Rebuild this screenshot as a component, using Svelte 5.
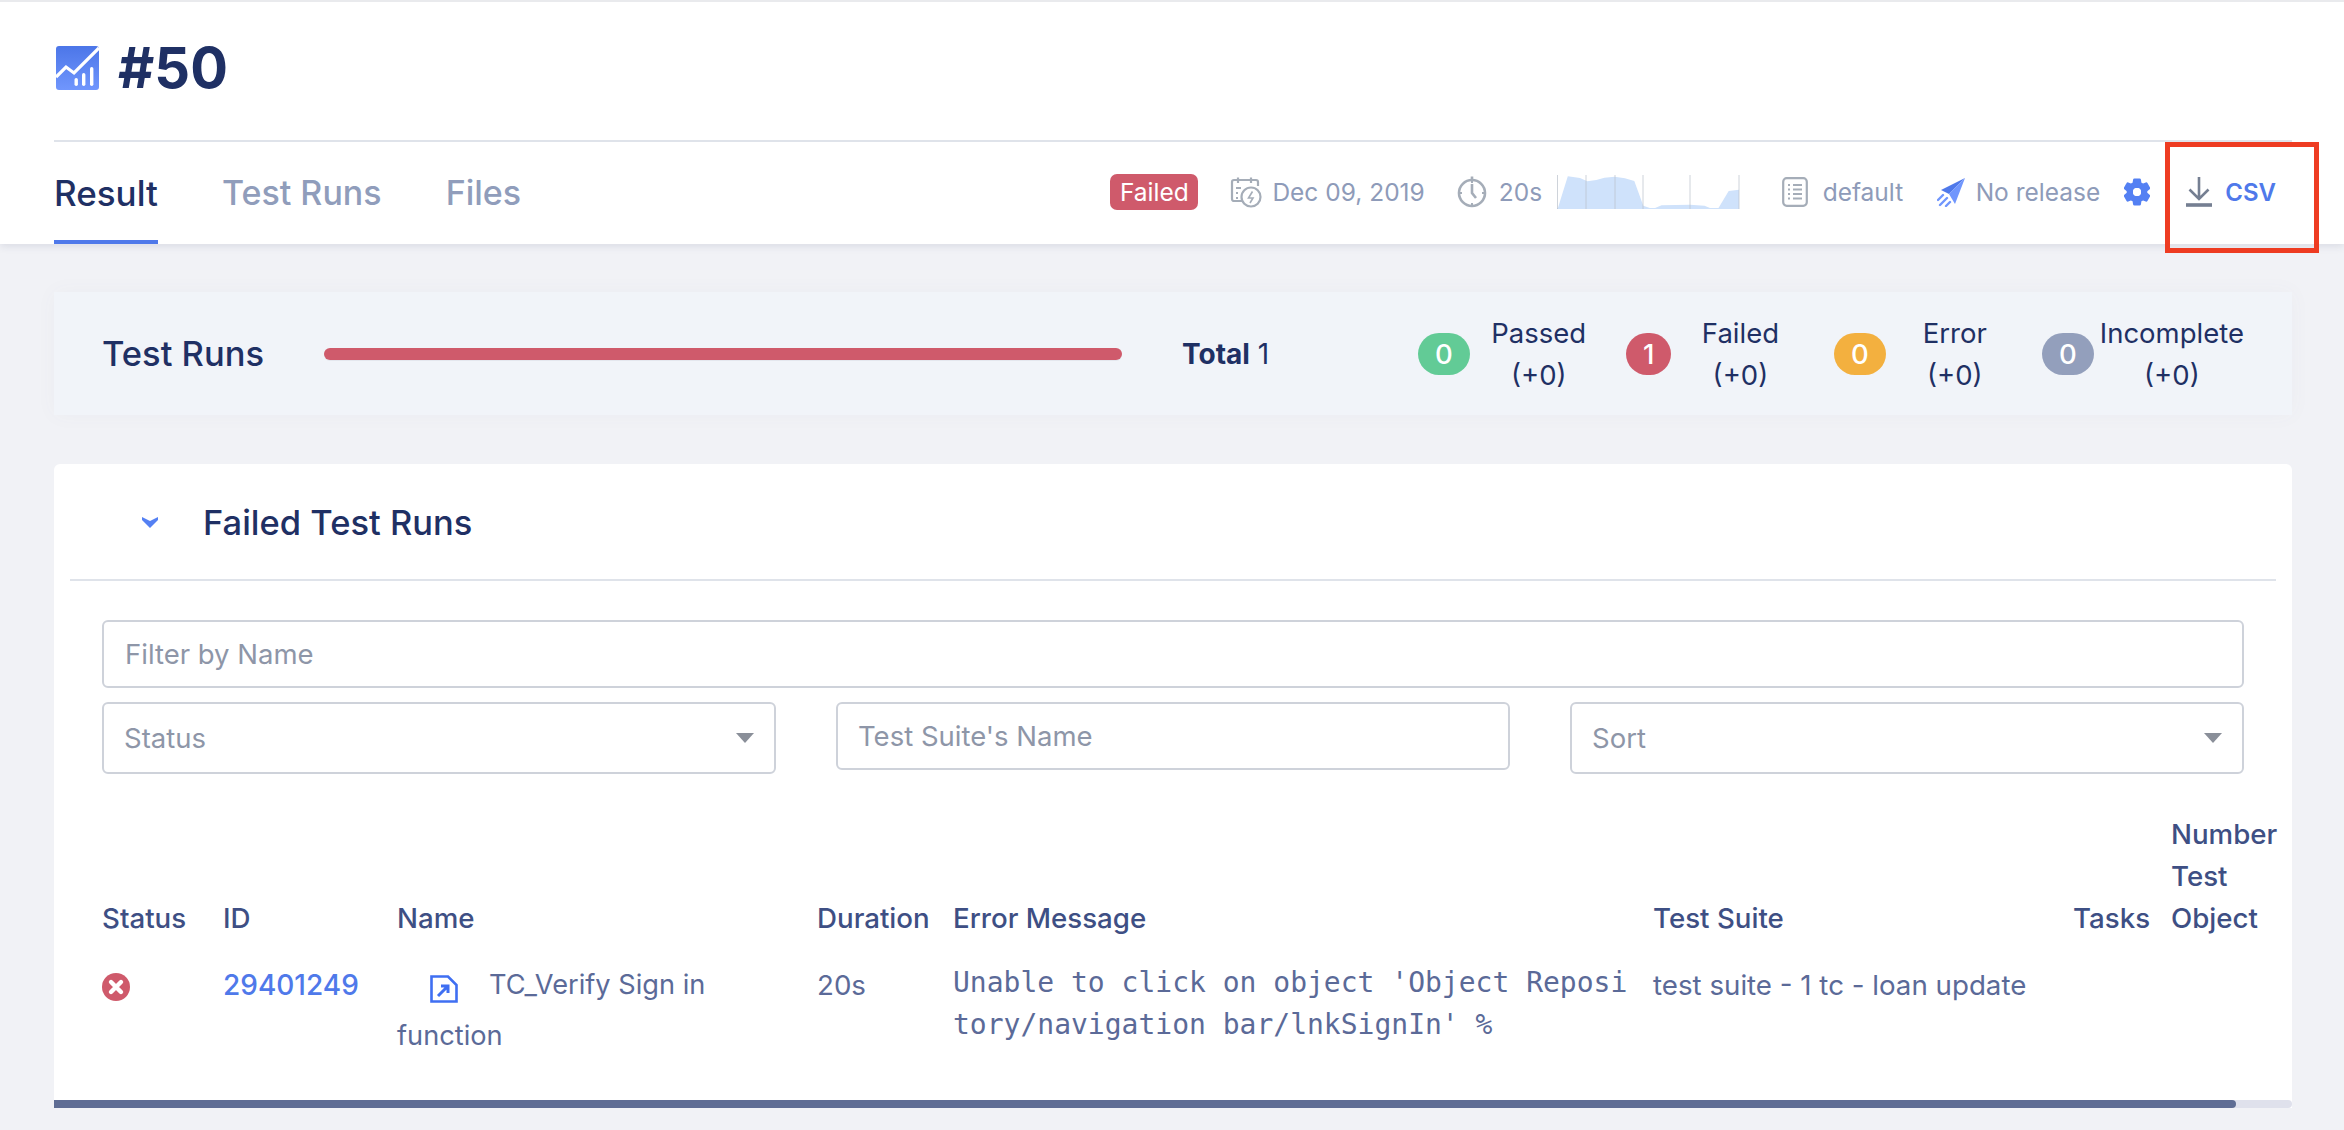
<script>
  const tabs = ['Result', 'Test Runs', 'Files'];
  const stats = [
    { label: 'Passed', count: 0, color: '#62cb96' },
    { label: 'Failed', count: 1, color: '#cf5a6b' },
    { label: 'Error', count: 0, color: '#f3b03f' },
    { label: 'Incomplete', count: 0, color: '#939fbc' }
  ];
  const gridlines = [0.5, 29, 58, 86, 133, 182];
  const spark = '0.6,34 10.8,1.3 23,3 30.3,6.3 39.3,5 47.5,2.7 57.7,1.7 67.9,3.3 77.3,6 86.3,30.7 95.7,34 104.6,30.3 133,29.7 147.5,30.7 153.6,33.3 161.5,33 171.7,16 182,14.7 182,34';
</script>

<div class="page">
  <header class="top">
    <div class="title">
      <svg class="logo" viewBox="0 0 43 44" width="43" height="44">
        <defs>
          <linearGradient id="lg" x1="0" y1="0" x2="0" y2="1">
            <stop offset="0" stop-color="#4c76e8" />
            <stop offset="1" stop-color="#7096fd" />
          </linearGradient>
        </defs>
        <rect width="43" height="44" rx="3" fill="url(#lg)" />
        <path d="M0 31 L10 21 L18 27 L43 2" fill="none" stroke="#fff" stroke-width="3.2" />
        <rect x="18.5" y="32" width="3.4" height="8" rx="1.7" fill="#fff" />
        <rect x="26" y="27" width="3.4" height="13" rx="1.7" fill="#fff" />
        <rect x="34" y="21" width="3.4" height="19" rx="1.7" fill="#fff" />
      </svg>
      <h1>#50</h1>
    </div>
    <div class="bar">
      <nav class="tabs">
        {#each tabs as tab, i}
          <span class="tab" class:active={i === 0}>{tab}</span>
        {/each}
      </nav>
      <div class="meta">
        <span class="badge">Failed</span>
        <svg class="ic cal" viewBox="0 0 32 32" width="32" height="32" fill="none" stroke="#a5adb8" stroke-width="2.2">
          <path d="M13 25 H4 a2 2 0 0 1-2-2 V6 a2 2 0 0 1 2-2 H26 a2 2 0 0 1 2 2 V10" />
          <path d="M8 1.5 V7 M21 1.5 V7" />
          <path d="M6 12 h5 M6 17 h2 M6 22 h2" />
          <circle cx="21" cy="21" r="9.5" />
          <path d="M22.5 15.5 L18.5 22 h4.5 L20 27" stroke-width="1.6" />
        </svg>
        <span class="txt date">Dec 09, 2019</span>
        <svg class="ic clock" viewBox="0 0 30 32" width="30" height="32" fill="none" stroke="#a5adb8" stroke-width="2.6">
          <circle cx="15" cy="17" r="13" />
          <path d="M15 3 V0.5 M15 8 V17 L19 22" />
          <path d="M15 4 V7 M15 27 V30 M2 17 H5 M25 17 H28" stroke-width="2" />
        </svg>
        <span class="txt dur">20s</span>
        <svg class="spark" viewBox="0 0 183 34" width="183" height="34">
          <polygon points={spark} fill="#cfe2fb" />
          <path d="M0 33.5 H182" stroke="#cfe2fb" />
          {#each gridlines as x}
            <line x1={x} x2={x} y1="0" y2="34" stroke="#b9c0cb" stroke-opacity="0.7" />
          {/each}
        </svg>
        <svg class="ic doc" viewBox="0 0 26 30" width="26" height="30" fill="none" stroke="#a5adb8" stroke-width="2.2">
          <rect x="1.2" y="1.2" width="23.6" height="27.6" rx="3.5" />
          <path d="M6 8 h2 M11 8 h9 M6 12.5 h2 M11 12.5 h9 M6 17 h2 M11 17 h9 M6 21.5 h2 M11 21.5 h9" stroke-width="1.8" />
        </svg>
        <span class="txt def">default</span>
        <svg class="ic rocket" viewBox="0 0 28 30" width="28" height="30">
          <path d="M28 1 L4 13 L12 17 Z" fill="#4f79ea" />
          <path d="M28 1 L12 17 L18 27 Z" fill="#7096fd" />
          <path d="M6 18 L1 23 M10 21 L3 28 M13 25 L9 29" stroke="#7096fd" stroke-width="2.4" stroke-linecap="round" />
        </svg>
        <span class="txt rel">No release</span>
        <svg class="ic gear" viewBox="2.2 2 19.6 20" width="26" height="28">
          <path fill="#5480f3" stroke="#5480f3" stroke-width="1.2" d="M19.14 12.94c.04-.3.06-.61.06-.94 0-.32-.02-.64-.07-.94l2.03-1.58a.49.49 0 0 0 .12-.61l-1.92-3.32a.488.488 0 0 0-.59-.22l-2.39.96c-.5-.38-1.03-.7-1.62-.94l-.36-2.54a.484.484 0 0 0-.48-.41h-3.84c-.24 0-.43.17-.47.41l-.36 2.54c-.59.24-1.13.57-1.62.94l-2.39-.96c-.22-.08-.47 0-.59.22L2.74 8.87c-.12.21-.08.47.12.61l2.03 1.58c-.05.3-.09.63-.09.94s.02.64.07.94l-2.03 1.58a.49.49 0 0 0-.12.61l1.92 3.32c.12.22.37.29.59.22l2.39-.96c.5.38 1.03.7 1.62.94l.36 2.54c.05.24.24.41.48.41h3.84c.24 0 .44-.17.47-.41l.36-2.54c.59-.24 1.13-.56 1.62-.94l2.39.96c.22.08.47 0 .59-.22l1.92-3.32c.12-.22.07-.47-.12-.61l-2.01-1.58zM12 15.6c-1.98 0-3.6-1.62-3.6-3.6s1.62-3.6 3.6-3.6 3.6 1.62 3.6 3.6-1.62 3.6-3.6 3.6z" />
          <circle cx="12" cy="12" r="3" fill="#fff" />
        </svg>
        <svg class="ic dl" viewBox="0 0 26 30" width="26" height="30" fill="none" stroke="#757f92">
          <path d="M13 0 V22 M3.5 12.5 L13 22 L22.5 12.5" stroke-width="2.6" />
          <path d="M0 28 H26" stroke-width="3.6" />
        </svg>
        <span class="csv">CSV</span>
      </div>
    </div>
    <div class="marker"></div>
  </header>

  <section class="summary">
    <h2 class="sum-title">Test Runs</h2>
    <div class="progress"></div>
    <div class="total"><b>Total</b> 1</div>
    <div class="stats">
      {#each stats as s}
        <div class="stat">
          <span class="pill" style="background:{s.color}">{s.count}</span>
          <span class="stat-label">{s.label}<br />(+0)</span>
        </div>
      {/each}
    </div>
  </section>

  <section class="card">
    <div class="card-head">
      <svg class="chev" viewBox="0 0 18 12" width="18" height="12">
        <path d="M1 1 L9 5 L17 1 L17 4 L9 12 L1 4 Z" fill="#5480f3" />
      </svg>
      <h2>Failed Test Runs</h2>
    </div>
    <div class="card-body">
      <input class="field filter" placeholder="Filter by Name" />
      <div class="filters">
        <div class="field select"><span>Status</span><i></i></div>
        <input class="field suite" placeholder="Test Suite's Name" />
        <div class="field select"><span>Sort</span><i></i></div>
      </div>
      <table>
        <colgroup>
          <col style="width:121px" />
          <col style="width:174px" />
          <col style="width:420px" />
          <col style="width:136px" />
          <col style="width:700px" />
          <col style="width:420px" />
          <col style="width:98px" />
          <col style="width:111px" />
        </colgroup>
        <thead>
          <tr>
            <th>Status</th>
            <th>ID</th>
            <th>Name</th>
            <th>Duration</th>
            <th>Error Message</th>
            <th>Test Suite</th>
            <th>Tasks</th>
            <th>Number Test Object</th>
          </tr>
        </thead>
        <tbody>
          <tr>
            <td>
              <svg class="x" viewBox="0 0 28 28" width="28" height="28">
                <circle cx="14" cy="14" r="14" fill="#cf5a6b" />
                <path d="M9 9 L19 19 M19 9 L9 19" stroke="#fff" stroke-width="4.4" stroke-linecap="round" />
              </svg>
            </td>
            <td><span class="link">29401249</span></td>
            <td class="name">
              <svg class="file" viewBox="0 0 28 28" width="28" height="28" fill="none" stroke="#3f6ff2">
                <path d="M1.5 1.5 H18 L26.5 10 V26.5 H1.5 Z" stroke-width="2.6" />
                <path d="M8 21 L18 11 M11 11 H18 V18" stroke-width="3" />
              </svg>TC_Verify Sign in function
            </td>
            <td>20s</td>
            <td class="err">Unable to click on object 'Object Repository/navigation bar/lnkSignIn' %</td>
            <td>test suite - 1 tc - loan update</td>
            <td></td>
            <td></td>
          </tr>
        </tbody>
      </table>
    </div>
    <div class="scroll"><div class="thumb"></div></div>
  </section>
</div>

<style>
  :global(body) {
    margin: 0;
    background: #f1f2f6;
    font-family: Inter, "Noto Sans", sans-serif;
    color: #1f3064;
  }

  .page {
    height: 1130px;
    overflow: hidden;
    position: relative;
  }

  .top {
    background: #fff;
    border-top: 2px solid #e9eaed;
    height: 242px;
    padding: 0 52px 0 54px;
    box-shadow: 0 2px 8px rgba(40, 50, 90, 0.12);
    position: relative;
  }

  .title {
    box-sizing: border-box;
    border-bottom: 2px solid #dfe3ea;
    height: 140px;
    display: flex;
    align-items: flex-start;
    padding: 44px 0 0 2px;
  }

  .logo {
    flex: none;
  }

  h1 {
    margin: -13px 0 0 19px;
    font-size: 56px;
    line-height: 70px;
    font-weight: 700;
  }

  .bar {
    display: flex;
    justify-content: space-between;
    height: 102px;
  }

  .tabs {
    display: flex;
    gap: 64px;
  }

  .tab {
    font-size: 34px;
    font-weight: 500;
    color: #909dbb;
    height: 98px;
    line-height: 102px;
  }

  .tab.active {
    font-size: 35px;
    color: #1f3064;
    border-bottom: 4px solid #4f79ea;
  }

  .meta {
    display: flex;
    align-items: center;
    font-size: 24.5px;
    color: #8e9bb9;
    height: 100px;
    margin-right: 16px;
  }

  .badge {
    background: #cf5a6b;
    color: #fff;
    border-radius: 7px;
    width: 88px;
    height: 36px;
    line-height: 36px;
    text-align: center;
    font-weight: 400;
  }

  .ic { flex: none; }
  .cal { margin-left: 32px; }
  .date { margin-left: 10px; }
  .clock { margin-left: 32px; }
  .dur { margin-left: 12px; }
  .spark { margin-left: 15px; flex: none; }
  .doc { margin-left: 41.5px; }
  .def { margin-left: 15px; }
  .rocket { margin-left: 33.5px; }
  .rel { margin-left: 11px; }
  .gear { margin-left: 24px; }
  .dl { margin-left: 36px; }

  .csv {
    margin-left: 13px;
    font-size: 24px;
    color: #4f79ea;
    font-weight: 600;
  }

  .txt { white-space: nowrap; }

  .marker {
    position: absolute;
    left: 2165px;
    top: 140px;
    width: 154px;
    height: 111px;
    box-sizing: border-box;
    border: 5px solid #ee3c22;
    pointer-events: none;
  }

  .summary {
    margin: 48px 52px 0 54px;
    height: 123px;
    box-sizing: border-box;
    padding: 0 0 0 48px;
    background: #f1f4f9;
    display: flex;
    align-items: center;
    box-shadow: 0 0 20px rgba(90, 100, 140, 0.04);
  }

  .sum-title {
    margin: 0;
    width: 222px;
    flex: none;
    font-size: 34.5px;
    font-weight: 500;
    color: #1f3064;
  }

  .progress {
    width: 798px;
    height: 12px;
    flex: none;
    border-radius: 6px;
    background: #cf5a6b;
    box-shadow: 0 1px 0 #e4e7ee;
  }

  .total {
    margin-left: 60px;
    width: 236px;
    flex: none;
    font-size: 28px;
  }

  .total b { font-weight: 700; }

  .stats {
    display: flex;
    height: 42px;
  }

  .stat {
    width: 208px;
    display: flex;
    align-items: flex-start;
  }

  .pill {
    height: 42px;
    flex: none;
    padding: 0 17px;
    border-radius: 21px;
    color: #fff;
    font-size: 27.5px;
    font-weight: 500;
    line-height: 42px;
    text-align: center;
    margin-top: 0;
  }

  .stat-label {
    width: 138px;
    text-align: center;
    font-size: 27.5px;
    line-height: 42px;
    margin-top: -21px;
    white-space: nowrap;
  }

  .stat:last-child .stat-label {
    width: 158px;
  }

  .card {
    margin: 49px 52px 0 54px;
    height: 644px;
    background: #fff;
    border-radius: 6px 6px 0 0;
    position: relative;
  }

  .card-head {
    height: 117px;
    box-sizing: border-box;
    margin: 0 16px;
    border-bottom: 2px solid #dfe3ea;
    display: flex;
    align-items: center;
    padding-left: 71px;
  }

  .card-head h2 {
    margin: 2px 0 0 44px;
    font-size: 34.5px;
    font-weight: 500;
    color: #1f3064;
  }

  .card-body {
    padding: 39px 48px 0;
  }

  .field {
    display: block;
    box-sizing: border-box;
    border: 2px solid #ced2da;
    border-radius: 6px;
    background: #fff;
    font: 400 27.5px Inter, "Noto Sans", sans-serif;
    color: #8e96a8;
    padding: 0 20px;
    outline: none;
  }

  .field::placeholder { color: #8e96a8; opacity: 1; }

  .filter {
    width: 100%;
    height: 68px;
    padding-left: 21px;
  }

  .filters {
    margin-top: 14px;
    display: flex;
    justify-content: space-between;
    align-items: flex-start;
  }

  .select {
    width: 674px;
    height: 72px;
    display: flex;
    align-items: center;
    justify-content: space-between;
  }

  .select i {
    width: 0;
    height: 0;
    border: 9px solid transparent;
    border-top: 10px solid #8a8f99;
    border-bottom: 0;
  }

  .suite {
    width: 674px;
    height: 68px;
  }

  table {
    margin-top: 39px;
    border-collapse: collapse;
    table-layout: fixed;
    width: 2180px;
    font-size: 27.7px;
  }

  th {
    padding: 0;
    text-align: left;
    vertical-align: bottom;
    font-weight: 500;
    line-height: 42px;
    color: #3e4f84;
  }

  td {
    padding: 25px 0 0;
    vertical-align: top;
    line-height: 42px;
    color: #5b6a98;
  }

  .x { display: block; margin-top: 9px; }

  .link {
    font-size: 28px;
    color: #4f79ea;
    font-weight: 500;
  }

  .name {
    font-size: 27.2px;
    line-height: 51px;
    padding-top: 20px;
    padding-right: 12px;
  }

  .file {
    margin: 0 31px 0 33px;
    vertical-align: -9px;
  }

  .err {
    font-family: "DejaVu Sans Mono", monospace;
    font-size: 28px;
    word-break: break-all;
    padding-top: 23px;
    padding-right: 12px;
  }

  .scroll {
    position: absolute;
    left: 0;
    right: 0;
    bottom: 0;
    height: 8px;
    border-radius: 4px;
    background: #dfe1ec;
  }

  .thumb {
    width: 2182px;
    height: 8px;
    border-radius: 0 4px 4px 0;
    background: #5f6d94;
  }
</style>
